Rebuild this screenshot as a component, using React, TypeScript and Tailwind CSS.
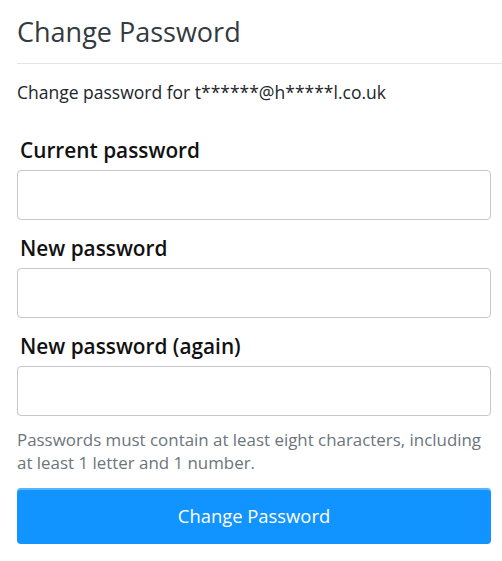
export default function App() {
  return (
    <div className="min-h-[561px] bg-white pl-[17px] pr-[11px] text-[#212529] [font-family:'Open_Sans',sans-serif]">
      <h1 className="mr-[-11px] border-b border-[#e5e5e5] pt-[14px] pb-[13px] text-[27px] leading-[36px] font-normal text-[#343a40]">
        Change Password
      </h1>
      <p className="mt-[16px] text-[17.5px] leading-[24px]">Change password for t******@h*****l.co.uk</p>
      <form className="mt-[31px] flex flex-col">
        <label className="pl-[3px] text-[20.8px] leading-[30px] font-semibold text-[#111]">Current password</label>
        <input type="password" className="mt-[5px] h-[50px] rounded-[4px] border border-[#c4c8cc] px-3" />
        <label className="mt-[13px] pl-[3px] text-[20.8px] leading-[30px] font-semibold text-[#111]">New password</label>
        <input type="password" className="mt-[5px] h-[50px] rounded-[4px] border border-[#c4c8cc] px-3" />
        <label className="mt-[13px] pl-[3px] text-[20.8px] leading-[30px] font-semibold text-[#111]">New password (again)</label>
        <input type="password" className="mt-[5px] h-[50px] rounded-[4px] border border-[#c4c8cc] px-3" />
        <p className="mt-[12px] text-[16.9px] leading-[23px] text-[#6c757d]">
          Passwords must contain at least eight characters, including at least 1 letter and 1 number.
        </p>
        <button
          type="button"
          className="mt-[14px] h-[56px] rounded-[4px] bg-[#1194ff] text-[18.4px] text-white shadow-[inset_0_2px_0_rgba(255,255,255,0.3)]"
        >
          Change Password
        </button>
      </form>
    </div>
  );
}
